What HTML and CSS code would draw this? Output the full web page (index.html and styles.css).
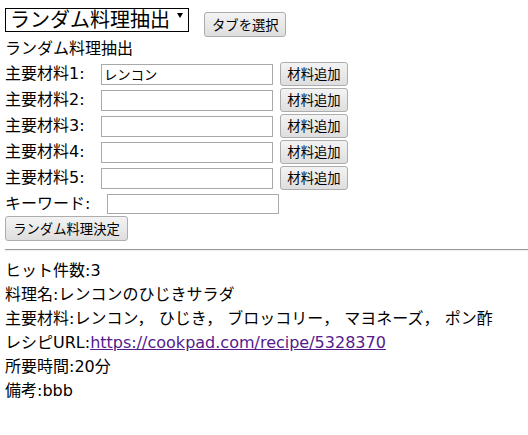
FILE: index.html
```html
<!DOCTYPE html>
<html lang="ja">
<head>
<meta charset="utf-8">
<title>ランダム料理抽出</title>
<link rel="stylesheet" href="styles.css">
</head>
<body>
<div class="top">
  <span class="select-wrap">
    <select class="tab-select">
      <option>ランダム料理抽出</option>
    </select>
    <span class="arrow"></span>
  </span>
  <button class="btn btn-tab">タブを選択</button>
</div>
<div class="title">ランダム料理抽出</div>
<form class="form">
  <div class="row">
    <span class="label">主要材料1:</span>
    <input class="field" type="text" value="レンコン">
    <button type="button" class="btn btn-add">材料追加</button>
  </div>
  <div class="row">
    <span class="label">主要材料2:</span>
    <input class="field" type="text">
    <button type="button" class="btn btn-add">材料追加</button>
  </div>
  <div class="row">
    <span class="label">主要材料3:</span>
    <input class="field" type="text">
    <button type="button" class="btn btn-add">材料追加</button>
  </div>
  <div class="row">
    <span class="label">主要材料4:</span>
    <input class="field" type="text">
    <button type="button" class="btn btn-add">材料追加</button>
  </div>
  <div class="row">
    <span class="label">主要材料5:</span>
    <input class="field" type="text">
    <button type="button" class="btn btn-add">材料追加</button>
  </div>
  <div class="row row-key">
    <span class="label label-key">キーワード:</span>
    <input class="field field-key" type="text">
  </div>
  <button type="button" class="btn btn-decide">ランダム料理決定</button>
</form>
<hr class="rule">
<div class="results">
  <div>ヒット件数:3</div>
  <div>料理名:レンコンのひじきサラダ</div>
  <div>主要材料:レンコン， ひじき， ブロッコリー， マヨネーズ， ポン酢</div>
  <div>レシピURL:<a class="link" href="#">https://cookpad.com/recipe/5328370</a></div>
  <div>所要時間:20分</div>
  <div>備考:bbb</div>
</div>
</body>
</html>
```

FILE: styles.css
```css
html, body {
  background: #ffffff;
}
body {
  margin: 8px 0 0 5px;
  font-family: "DejaVu Sans", "Noto Sans CJK JP", sans-serif;
  font-size: 16px;
  line-height: 24px;
  color: #000000;
}
.top {
  display: flex;
  align-items: flex-start;
  height: 29px;
}
.select-wrap {
  position: relative;
  display: inline-block;
  width: 184px;
  height: 24px;
}
.tab-select {
  appearance: none;
  -webkit-appearance: none;
  box-sizing: border-box;
  width: 184px;
  height: 24px;
  margin: 0;
  padding: 0 0 2px 4px;
  border: 1px solid #000000;
  border-radius: 0;
  background: #ffffff;
  color: #000000;
  font-family: "Noto Sans CJK JP", sans-serif;
  font-size: 20px;
  line-height: 20px;
}
.arrow {
  position: absolute;
  right: 6px;
  top: 5px;
  width: 0;
  height: 0;
  border-left: 3px solid transparent;
  border-right: 3px solid transparent;
  border-top: 5px solid #000000;
}
.btn {
  box-sizing: border-box;
  margin: 0;
  padding: 0 7px;
  border: 1px solid #adadad;
  border-radius: 3px;
  background: linear-gradient(#f3f3f3, #e9e9e9 50%, #dedede);
  color: #000000;
  font-family: "Noto Sans CJK JP", sans-serif;
  font-size: 13.33px;
  line-height: 16px;
  white-space: nowrap;
}
.btn-tab {
  width: 82px;
  height: 25px;
  margin: 4px 0 0 15px;
}
.title {
  height: 24px;
}
.form {
  margin: 0;
}
.row {
  display: flex;
  align-items: center;
  height: 26px;
}
.label {
  width: 96px;
  flex: none;
}
.label-key {
  width: 102px;
}
.row-key {
  height: 25px;
}
.field {
  box-sizing: border-box;
  width: 172px;
  height: 21px;
  margin: 0;
  padding: 0 2px;
  border: 1px solid #a9a9a9;
  border-radius: 0;
  background: #ffffff;
  color: #000000;
  font-family: "Noto Sans CJK JP", sans-serif;
  font-size: 13.33px;
  flex: none;
}
.field-key {
  height: 20px;
}
.btn-add {
  width: 68px;
  height: 24px;
  margin-left: 7px;
  padding: 0 6px;
}
.btn-decide {
  display: block;
  width: 123px;
  height: 25px;
}
.rule {
  margin: 8px 0;
  height: 0;
  border: 0;
  border-top: 1px solid #9a9a9a;
  border-bottom: 1px solid #eeeeee;
}
.results {
  line-height: 24px;
}
.link {
  color: #551a8b;
  text-decoration: underline;
}
```
